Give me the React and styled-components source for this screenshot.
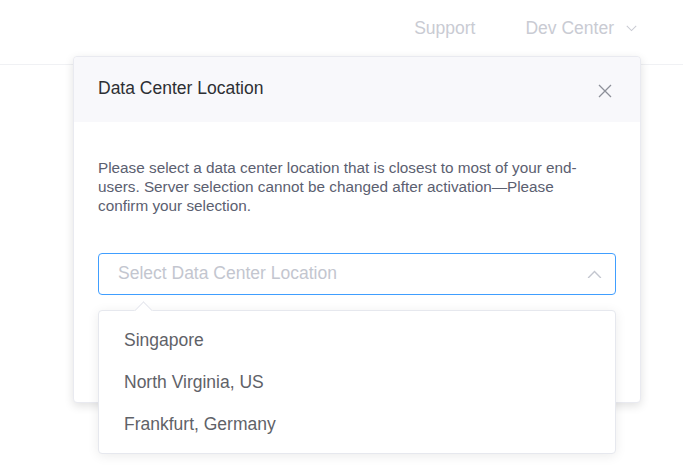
import styled, { createGlobalStyle } from 'styled-components';

const GlobalStyle = createGlobalStyle`
  html, body {
    margin: 0;
    padding: 0;
    background: #fff;
    font-family: "Liberation Sans", Arial, sans-serif;
  }
  * {
    box-sizing: border-box;
  }
`;

const Page = styled.div`
  position: relative;
  width: 683px;
  height: 476px;
  overflow: hidden;
  background: #fff;
`;

const Header = styled.header`
  height: 65px;
  border-bottom: 1px solid #f0f1f4;
  display: flex;
  align-items: center;
  justify-content: flex-end;
  padding-right: 46px;
  gap: 50px;
`;

const NavItem = styled.a`
  display: flex;
  align-items: center;
  gap: 12px;
  font-size: 17.5px;
  color: #c9cbd3;
  text-decoration: none;
  padding-bottom: 7px;
`;

const Modal = styled.div`
  position: absolute;
  left: 73px;
  top: 56px;
  width: 568px;
  height: 347px;
  background: #fff;
  border: 1px solid #e9eaf0;
  border-radius: 4px;
  box-shadow: 0 3px 10px rgba(0, 0, 0, 0.12);
`;

const ModalHead = styled.div`
  height: 65px;
  background: #f8f8fb;
  display: flex;
  align-items: center;
  justify-content: space-between;
  padding: 0 28px 0 24px;
  border-radius: 4px 4px 0 0;
`;

const Title = styled.h3`
  margin: 0;
  font-size: 17.5px;
  font-weight: 400;
  color: #2d2f33;
  padding-bottom: 2px;
`;

const CloseBtn = styled.button`
  border: 0;
  background: none;
  padding: 0;
  margin-top: 3px;
  width: 14px;
  height: 14px;
  display: flex;
  cursor: pointer;
`;

const ModalBody = styled.div`
  padding: 36px 24px 0 24px;
`;

const Desc = styled.p`
  margin: 0 0 38px;
  max-width: 500px;
  font-size: 15.3px;
  line-height: 19px;
  color: #5b6070;
`;

const SelectWrap = styled.div`
  position: relative;
`;

const SelectBox = styled.div`
  height: 42px;
  border: 1px solid #409eff;
  border-radius: 4px;
  display: flex;
  align-items: center;
  justify-content: space-between;
  padding: 0 13px 0 19px;
`;

const Placeholder = styled.span`
  font-size: 17.5px;
  color: #c3c6cf;
  padding-bottom: 2px;
`;

const Dropdown = styled.ul`
  position: absolute;
  left: 0;
  right: 0;
  top: 57px;
  margin: 0;
  list-style: none;
  padding: 8px 0;
  background: #fff;
  border: 1px solid #e6e8ee;
  border-radius: 4px;
  box-shadow: 0 2px 12px rgba(0, 0, 0, 0.08);

  &::before {
    content: '';
    position: absolute;
    top: -7px;
    left: 38px;
    width: 12px;
    height: 12px;
    background: #fff;
    border-left: 1px solid #e6e8ee;
    border-top: 1px solid #e6e8ee;
    transform: rotate(45deg);
  }
`;

const Option = styled.li`
  height: 42px;
  display: flex;
  align-items: center;
  padding: 0 25px;
  font-size: 17.5px;
  color: #5f6268;
  cursor: pointer;
`;

const Chevron = ({ up, color, size = 14 }) => (
  <svg width={size} height={size / 2 + 1} viewBox="0 0 14 8" fill="none">
    <path
      d={up ? 'M1 7.5 L7 1.5 L13 7.5' : 'M1 1 L7 7 L13 1'}
      stroke={color}
      strokeWidth="1.3"
    />
  </svg>
);

const options = ['Singapore', 'North Virginia, US', 'Frankfurt, Germany'];

export default function App() {
  return (
    <Page>
      <GlobalStyle />
      <Header>
        <NavItem>Support</NavItem>
        <NavItem>
          Dev Center
          <Chevron color="#c9cbd3" size={11} />
        </NavItem>
      </Header>
      <Modal>
        <ModalHead>
          <Title>Data Center Location</Title>
          <CloseBtn aria-label="close">
            <svg width="14" height="14" viewBox="0 0 14 14">
              <path d="M1 1 L13 13 M13 1 L1 13" stroke="#8d9099" strokeWidth="1.3" />
            </svg>
          </CloseBtn>
        </ModalHead>
        <ModalBody>
          <Desc>
            Please select a data center location that is closest to most of your end-users.
            Server selection cannot be changed after activation—Please confirm your selection.
          </Desc>
          <SelectWrap>
            <SelectBox>
              <Placeholder>Select Data Center Location</Placeholder>
              <Chevron up color="#c3c6cf" size={15} />
            </SelectBox>
            <Dropdown>
              {options.map((o) => (
                <Option key={o}>{o}</Option>
              ))}
            </Dropdown>
          </SelectWrap>
        </ModalBody>
      </Modal>
    </Page>
  );
}
